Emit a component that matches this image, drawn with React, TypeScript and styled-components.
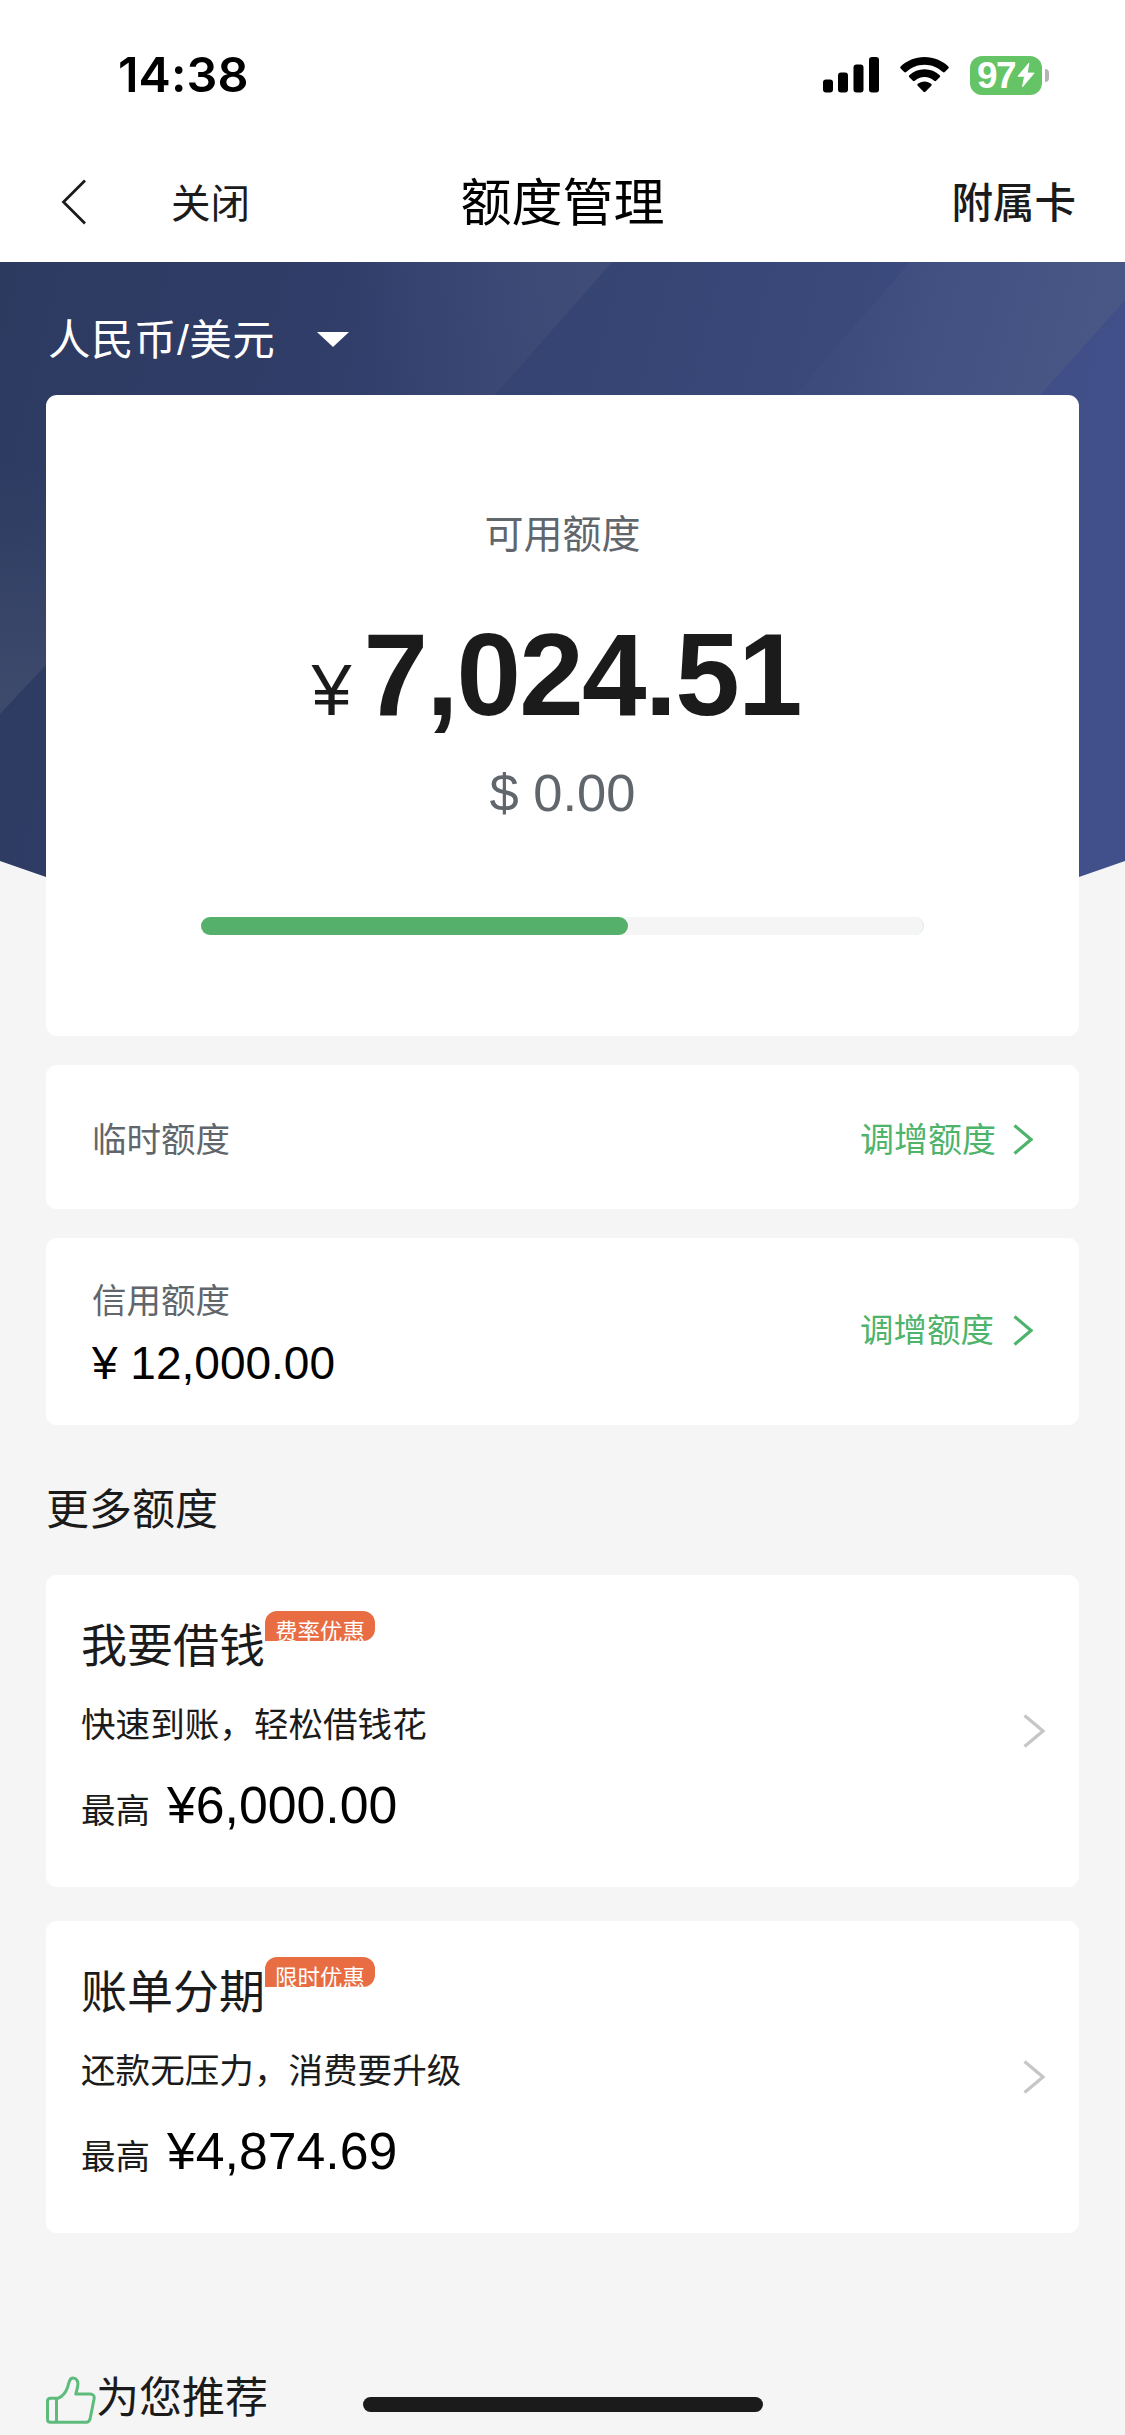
import React from 'react';
import styled, { createGlobalStyle } from 'styled-components';

const GlobalStyle = createGlobalStyle`
  * { box-sizing: border-box; }
  body {
    margin: 0;
    background: #f5f5f5;
    font-family: "Liberation Sans", "Noto Sans CJK SC", sans-serif;
    color: #1b1b1b;
  }
`;

const Page = styled.main`
  position: relative;
  width: 1125px;
  height: 2435px;
  overflow: hidden;
  background: #f5f5f5;
`;

const StatusBar = styled.div`
  display: flex;
  align-items: center;
  justify-content: space-between;
  height: 150px;
  padding: 0 76px 0 118px;
  background: #fff;
`;

const Clock = styled.div`
  font-family: Inter, sans-serif;
  font-size: 48.5px;
  font-weight: 600;
  letter-spacing: 0.1px;
  line-height: 60px;
  color: #000;
`;

const StatusIcons = styled.div`
  display: flex;
  align-items: center;
  gap: 21px;
`;

const Battery = styled.div`
  display: flex;
  align-items: center;
  gap: 3px;
`;

const BatteryBody = styled.div`
  display: flex;
  align-items: center;
  justify-content: center;
  gap: 2px;
  width: 72px;
  height: 39px;
  border-radius: 12px;
  background: #65c466;
  color: #fff;
  font-size: 37px;
  font-weight: 700;
  letter-spacing: -1.5px;
  line-height: 41px;
`;

const BatteryTip = styled.div`
  width: 4px;
  height: 13px;
  border-radius: 0 5px 5px 0;
  background: #b4b4b6;
`;

const NavBar = styled.header`
  display: grid;
  grid-template-columns: 1fr auto 1fr;
  align-items: center;
  height: 112px;
  padding: 0 49px 8px 61px;
  background: #fff;
`;

const NavLeft = styled.div`
  display: flex;
  align-items: center;
  gap: 84px;
`;

const NavClose = styled.span`
  padding-top: 3px;
  font-size: 39.5px;
  line-height: 50px;
`;

const NavTitle = styled.h1`
  margin: 0;
  padding: 4px 12px 0 0;
  font-size: 51px;
  font-weight: 400;
  line-height: 60px;
  color: #000;
`;

const NavAction = styled.span`
  justify-self: end;
  padding-top: 3px;
  font-size: 41.5px;
  font-weight: 500;
  line-height: 50px;
`;

const Hero = styled.section`
  position: relative;
  display: flex;
  flex-direction: column;
  padding: 0 46px;
`;

const HeroArt = styled.svg`
  position: absolute;
  left: 0;
  top: 0;
`;

const CurrencyPicker = styled.div`
  position: relative;
  display: flex;
  align-items: center;
  gap: 42px;
  height: 133px;
  padding: 24px 0 0 2px;
  color: #fff;
  font-size: 42.5px;
  letter-spacing: 0.5px;
  line-height: 60px;
`;

const Triangle = styled.i`
  border: 16px solid transparent;
  border-top: 15px solid #fff;
  border-bottom: 0;
  margin-top: -3px;
`;

const Card = styled.section`
  position: relative;
  border-radius: 11px;
  background: #fff;
`;

const SummaryCard = styled(Card)`
  display: flex;
  flex-direction: column;
  align-items: center;
  height: 641px;
  padding-top: 110px;
`;

const SummaryLabel = styled.div`
  font-size: 39px;
  line-height: 60px;
  color: #60666c;
`;

const BigAmount = styled.div`
  display: flex;
  align-items: baseline;
  gap: 12px;
  margin: 45px 0 0 -13px;
  height: 130px;
  line-height: 130px;
`;

const BigSymbol = styled.span`
  font-size: 72px;
`;

const BigDigits = styled.strong`
  font-size: 116px;
  letter-spacing: -1.8px;
`;

const DollarAmount = styled.div`
  margin-top: 23px;
  font-size: 52.5px;
  line-height: 60px;
  color: #60666c;
`;

const Track = styled.div`
  width: 723px;
  height: 18px;
  margin-top: 94px;
  border-radius: 9px;
  background: #f5f5f5;
  box-shadow: inset -1px 0 0 #dcefe2;
`;

const TrackFill = styled.div<{ $percent: number }>`
  width: ${(p) => p.$percent}%;
  height: 100%;
  border-radius: 9px;
  background: #55b06b;
`;

const Content = styled.div`
  display: flex;
  flex-direction: column;
  padding: 29px 46px 0;
`;

const LimitCard = styled(Card)<{ $height: number }>`
  display: flex;
  align-items: center;
  justify-content: space-between;
  height: ${(p) => p.$height}px;
  margin-bottom: 29px;
  padding: 5px 46px 0 46px;
`;

const LimitLabel = styled.div`
  font-size: 34.5px;
  line-height: 50px;
  color: #60666c;
`;

const LimitValue = styled.div`
  margin-top: 7px;
  font-size: 46px;
  line-height: 60px;
  color: #000;
`;

const Adjust = styled.a<{ $size: number; $gap: number; $lift: number }>`
  display: flex;
  align-items: center;
  gap: ${(p) => p.$gap}px;
  margin-bottom: ${(p) => p.$lift}px;
  font-size: ${(p) => p.$size}px;
  line-height: 50px;
  color: #4eb36b;
`;

const SectionTitle = styled.h2<{ $top: number }>`
  display: flex;
  align-items: center;
  margin: ${(p) => p.$top}px 0 0;
  font-size: 43px;
  font-weight: 400;
  line-height: 60px;

  & > svg { margin-top: 4px; }
`;

const OfferList = styled.div`
  display: flex;
  flex-direction: column;
  gap: 34px;
  margin-top: 35px;
`;

const OfferCard = styled(Card)`
  display: flex;
  align-items: center;
  justify-content: space-between;
  height: 312px;
  padding: 0 34px 0 35px;
`;

const OfferBody = styled.div`
  display: flex;
  flex-direction: column;
  align-self: flex-start;
`;

const OfferHead = styled.div`
  display: flex;
  align-items: flex-start;
  padding-top: 36px;
`;

const OfferTitle = styled.h3`
  margin: 5px 0 0;
  font-size: 46px;
  font-weight: 400;
  line-height: 60px;
`;

const Badge = styled.span`
  height: 30px;
  padding: 9px 10px 0 10px;
  border-radius: 12px 12px 12px 0;
  background: #e96d43;
  color: #fff;
  font-size: 22.5px;
  line-height: 26px;
`;

const OfferText = styled.p`
  margin: 24px 0 0;
  font-size: 34.6px;
  line-height: 50px;
`;

const OfferAmount = styled.div`
  display: flex;
  align-items: baseline;
  gap: 17px;
  margin-top: 25px;
  font-size: 34.5px;
  line-height: 60px;
`;

const OfferValue = styled.span`
  font-size: 51.75px;
  color: #000;
`;

const HomeIndicator = styled.div`
  position: absolute;
  left: 363px;
  bottom: 23px;
  width: 400px;
  height: 15px;
  border-radius: 8px;
  background: #1b1b1b;
`;

const Chevron = ({ color, width, height, stroke }: { color: string; width: number; height: number; stroke: number }) => (
  <svg width={width} height={height} viewBox={`0 0 ${width} ${height}`} fill="none">
    <path
      d={`M1.5 1.5L${width - 2} ${height / 2}L1.5 ${height - 1.5}`}
      stroke={color}
      strokeWidth={stroke}
    />
  </svg>
);

const Signal = () => (
  <svg width="56" height="36" viewBox="0 0 56 36">
    <rect x="0" y="22.5" width="10" height="13" rx="3" />
    <rect x="15" y="15.5" width="10" height="20" rx="3" />
    <rect x="30.5" y="7.5" width="10" height="28" rx="3" />
    <rect x="46" y="0" width="10" height="35.5" rx="3" />
  </svg>
);

const Wifi = () => (
  <svg width="49" height="36" viewBox="0 0 49 36">
    <path d="M24.5 0C15.2 0 6.8 3.600 .7 9.400c-.6.600-.6 1.400 0 2l3.500 3.600c.5.600 1.400.600 2 0C11 10.500 17.400 7.700 24.500 7.700S38 10.500 42.800 15c.6.600 1.500.600 2 0l3.500-3.600c.6-.6.600-1.400 0-2C42.200 3.600 33.800 0 24.500 0z" />
    <path d="M24.500 12.300c-5.900 0-11.200 2.200-15.200 5.900-.6.600-.6 1.500 0 2l3.600 3.600c.5.500 1.300.5 1.900 0 2.600-2.300 6-3.700 9.700-3.700s7.100 1.400 9.700 3.700c.6.500 1.400.5 1.900 0l3.600-3.600c.6-.5.600-1.400 0-2-4-3.700-9.300-5.900-15.200-5.900z" />
    <path d="M24.500 24.400c-2.600 0-4.900.9-6.700 2.400-.6.500-.6 1.300-.1 1.900l5.900 6c.5.600 1.300.600 1.800 0l5.900-6c.5-.6.500-1.400-.1-1.900-1.800-1.500-4.100-2.400-6.700-2.400z" />
  </svg>
);

const Bolt = () => (
  <svg width="18" height="28" viewBox="0 0 19 28">
    <path d="M12.500 1.500L1 15.300h7L5.800 26.500 18 12h-7.200z" fill="#fff" stroke="#fff" strokeLinejoin="round" />
  </svg>
);

const BackIcon = () => (
  <svg width="26" height="46" viewBox="0 0 26 46" fill="none">
    <path d="M24 1.500L2.500 23 24 44.500" stroke="#1b1b1b" strokeWidth="2.800" />
  </svg>
);

const ThumbIcon = () => (
  <svg width="50" height="48" viewBox="0 0 50 48" fill="none" stroke="#5dbb7b" strokeWidth="3" strokeLinejoin="round">
    <path d="M4.500 22.300H12c5-2 8-6.300 9.700-11.300 1.300-5.300 2.100-9 5.200-9 3.700 0 5.400 3.200 4.900 7.200-.4 3.200-1.200 6-2 8.800H44c3.200 0 4.600 2 4.100 4.700l-4.100 20.500c-.5 2-1.600 3-3.700 3H4.500c-2 0-3-1-3-3V25.300c0-2 1-3 3-3z" />
    <path d="M10.500 22.500v23" />
  </svg>
);

const HeroBackdrop = () => (
  <HeroArt width="1125" height="680" viewBox="0 0 1125 680">
    <defs>
      <linearGradient id="base" x1="0" y1="0" x2="1" y2="0.150">
        <stop offset="0" stopColor="#2d3a60" />
        <stop offset="0.250" stopColor="#2f3c66" />
        <stop offset="0.450" stopColor="#354372" />
        <stop offset="0.750" stopColor="#3a497a" />
        <stop offset="1" stopColor="#41508a" />
      </linearGradient>
      <linearGradient id="facetA" x1="350" y1="0" x2="590" y2="-60" gradientUnits="userSpaceOnUse">
        <stop offset="0" stopColor="#434f78" stopOpacity="0" />
        <stop offset="1" stopColor="#434f78" stopOpacity="0.800" />
      </linearGradient>
      <linearGradient id="facetB" x1="820" y1="60" x2="1080" y2="130" gradientUnits="userSpaceOnUse">
        <stop offset="0" stopColor="#4a5885" stopOpacity="0.100" />
        <stop offset="1" stopColor="#4a5885" stopOpacity="0.850" />
      </linearGradient>
      <linearGradient id="facetC" x1="0" y1="200" x2="0" y2="440" gradientUnits="userSpaceOnUse">
        <stop offset="0" stopColor="#3f4c6d" stopOpacity="0" />
        <stop offset="1" stopColor="#3f4c6d" stopOpacity="0.900" />
      </linearGradient>
      <clipPath id="bowl">
        <path d="M0 0H1125V599Q1102 607 1079 615Q562 730 46 615Q23 607 0 599Z" />
      </clipPath>
    </defs>
    <g clipPath="url(#bowl)">
      <rect width="1125" height="680" fill="url(#base)" />
      <path d="M300 0H612L480 150H240Z" fill="url(#facetA)" />
      <path d="M910 0H1125V38L1025 150H780Z" fill="url(#facetB)" />
      <path d="M0 200H60V388L0 452Z" fill="url(#facetC)" />
    </g>
  </HeroArt>
);

const offers = [
  { title: '我要借钱', badge: '费率优惠', text: '快速到账，轻松借钱花', value: '¥6,000.00' },
  { title: '账单分期', badge: '限时优惠', text: '还款无压力，消费要升级', value: '¥4,874.69' },
];

export default function App() {
  return (
    <Page lang="zh-CN">
      <GlobalStyle />
      <StatusBar>
        <Clock>14:38</Clock>
        <StatusIcons>
          <Signal />
          <Wifi />
          <Battery>
            <BatteryBody>
              97
              <Bolt />
            </BatteryBody>
            <BatteryTip />
          </Battery>
        </StatusIcons>
      </StatusBar>
      <NavBar>
        <NavLeft>
          <BackIcon />
          <NavClose>关闭</NavClose>
        </NavLeft>
        <NavTitle>额度管理</NavTitle>
        <NavAction>附属卡</NavAction>
      </NavBar>

      <Hero>
        <HeroBackdrop />
        <CurrencyPicker>
          人民币/美元
          <Triangle />
        </CurrencyPicker>
        <SummaryCard>
          <SummaryLabel>可用额度</SummaryLabel>
          <BigAmount>
            <BigSymbol>¥</BigSymbol>
            <BigDigits>7,024.51</BigDigits>
          </BigAmount>
          <DollarAmount>$ 0.00</DollarAmount>
          <Track>
            <TrackFill $percent={59} />
          </Track>
        </SummaryCard>
      </Hero>

      <Content>
        <LimitCard $height={144}>
          <LimitLabel>临时额度</LimitLabel>
          <Adjust $size={34} $gap={17} $lift={0}>
            调增额度
            <Chevron color="#4eb36b" width={20} height={31} stroke={3.2} />
          </Adjust>
        </LimitCard>
        <LimitCard $height={187}>
          <div>
            <LimitLabel>信用额度</LimitLabel>
            <LimitValue>¥ 12,000.00</LimitValue>
          </div>
          <Adjust $size={33.5} $gap={19} $lift={7}>
            调增额度
            <Chevron color="#4eb36b" width={20} height={31} stroke={3.2} />
          </Adjust>
        </LimitCard>

        <SectionTitle $top={26}>更多额度</SectionTitle>
        <OfferList>
          {offers.map((offer) => (
            <OfferCard key={offer.title}>
              <OfferBody>
                <OfferHead>
                  <OfferTitle>{offer.title}</OfferTitle>
                  <Badge>{offer.badge}</Badge>
                </OfferHead>
                <OfferText>{offer.text}</OfferText>
                <OfferAmount>
                  最高
                  <OfferValue>{offer.value}</OfferValue>
                </OfferAmount>
              </OfferBody>
              <Chevron color="#c6c6c8" width={22} height={34} stroke={3.2} />
            </OfferCard>
          ))}
        </OfferList>

        <SectionTitle $top={135}>
          <ThumbIcon />
          为您推荐
        </SectionTitle>
      </Content>
      <HomeIndicator />
    </Page>
  );
}
